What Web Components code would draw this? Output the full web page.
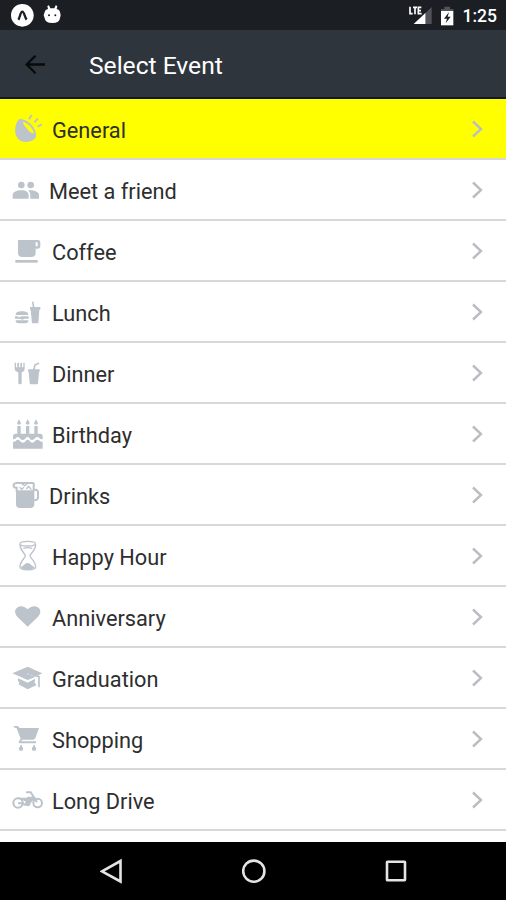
<!DOCTYPE html>
<html lang="en">
<head>
<meta charset="utf-8">
<title>Select Event</title>
<style>
html, body {
  margin: 0;
  height: 100%;
  overflow: hidden;
  background: #fff;
  font-family: Roboto, "Liberation Sans", sans-serif;
}
</style>
</head>
<body>
<event-screen></event-screen>

<script>
// Row icons share one grid: three units per pixel, the full height of a row
const icons = {
  general: `
    <path fill-rule="evenodd" d="M57 61C42 76 43 104 52 117C63 132 91 134 107 116C113 101 99 77 82 67C72 61 63 58 57 61ZM69 69C82 70 98 87 102 103C95 103 88 99 84 93C79 85 71 82 69 69Z"/>
    <path class="line" stroke-width="6" d="M87 61L95 48M103 70L114 58M113 83L126 76"/>`,
  friends: `
    <circle cx="64" cy="75" r="10"/><circle cx="92" cy="75" r="10"/>
    <path d="M38 116V107C38 95 50 91 64 91S86 96 86 107V116ZM91 116V106C91 100 88 95 84 91C102 90 117 95 117 106V116Z"/>`,
  coffee: `
    <path fill-rule="evenodd" d="M54 57H114Q121 57 121 65V75Q121 83 112 83H107V95Q107 108 94 108H67Q54 108 54 95ZM107 64V76H113V64Z"/>
    <path d="M46 117H113V125H46Z"/>`,
  lunch: `
    <path d="M47 99C47 91 54 88 66 88S85 91 85 99ZM45 103H53L58 106L64 103H86V110H73L67 113L60 110H45ZM47 115H85C85 122 82 124 77 124H56C50 124 47 122 47 115Z"/>
    <path d="M90 75H98L96 60L100 58L103 75H121V83H118L115 124H96L92 83H90Z"/>`,
  dinner: `
    <path d="M44 59H48V73H52V59H57V73H61V59H66V73H70V59H74V76Q74 86 65 88V121Q65 124 60 124T55 121V88Q44 86 44 76Z"/>
    <path d="M84 79H119V86H117L114 121Q114 124 110 124H94Q90 124 89 121L86 86H84Z"/>
    <path class="line" stroke-width="5" d="M101 82L105 66L117 60"/>`,
  birthday: `
    <path d="M52 66H62V89H78V66H88V89H103V66H113V89H121Q128 89 128 97V105C119 108 118 99 112 99C103 99 105 108 96 108S91 99 83 99S77 108 68 108S61 99 54 99S48 108 39 105V97Q39 89 47 89H52Z"/>
    <path d="M39 113C48 114 48 107 54 107S61 116 69 116S76 107 83 107S90 116 97 116S105 107 112 107S119 114 128 113V134H39Z"/>
    <path d="M57 46L63 57Q62 62 57 62T51 57ZM83 46L89 57Q88 62 83 62T77 57ZM108 46L114 57Q113 62 108 62T102 57Z"/>`,
  drinks: `
    <path d="M48 76H103V118Q103 129 91 129H60Q48 129 48 118Z"/>
    <path class="line" stroke-width="6" d="M50 80V68C38 69 38 55 47 55Q51 52 56 54H98Q103 54 101 63V78M102 74H108Q114 75 114 82V97Q114 106 102 106"/>
    <path class="line" stroke-width="4" d="M59 67L65 73L72 67M79 72L86 64L94 74M65 56L74 62L82 56"/>`,
  hourglass: `
    <ellipse class="line" stroke-width="4" cx="83" cy="53" rx="23" ry="7"/>
    <path class="line" stroke-width="4" d="M60 55C60 76 76 82 76 89S60 105 60 123C60 134 107 134 107 123C107 106 90 96 90 89S107 76 107 55M70 67Q83 63 97 67"/>
    <path d="M62 123Q68 122 74 115Q83 107 91 115Q98 122 104 123Q98 132 83 132T62 123Z"/>`,
  heart: `
    <path d="M83 119L52 89C32 67 61 45 83 67C105 45 135 67 114 89Z"/>`,
  graduation: `
    <path d="M37 76L83 56L127 76L112 83L84 75L81 79L107 86L83 96Z"/>
    <path d="M54 91L83 104L105 92V98Q101 103 110 111L83 124L55 109Q61 105 54 98Z"/>
    <path class="line" stroke-width="5" d="M84 77L117 86V118"/>`,
  cart: `
    <path d="M41 51H52Q57 52 59 57H117L106 88Q104 92 99 92H67L63 97H108V103H61Q54 102 57 97L62 89L50 58Q46 56 41 55Z"/>
    <circle cx="63" cy="119" r="6.5"/><circle cx="102" cy="119" r="6.5"/>
    <path d="M61 108H66V115H61ZM100 108H105V115H100Z"/>`,
  motorcycle: `
    <circle class="line" stroke-width="6" cx="54" cy="99" r="14"/>
    <circle class="line" stroke-width="6" cx="113" cy="99" r="13"/>
    <path d="M45 85C60 78 74 88 85 80H104L110 88C96 90 94 97 88 109L68 106L78 95Q68 91 61 88Z"/>
    <path class="line" stroke-width="6" d="M78 67H92L111 97M54 100H72"/>`
}

const events = [
  ['general', 'General'],
  ['friends', 'Meet a friend'],
  ['coffee', 'Coffee'],
  ['lunch', 'Lunch'],
  ['dinner', 'Dinner'],
  ['birthday', 'Birthday'],
  ['drinks', 'Drinks'],
  ['hourglass', 'Happy Hour'],
  ['heart', 'Anniversary'],
  ['graduation', 'Graduation'],
  ['cart', 'Shopping'],
  ['motorcycle', 'Long Drive']
]

customElements.define('status-bar',
  /**
   * System bar with notifications on the left, signal, battery and clock on the right.
   */
  class extends HTMLElement {
    constructor () {
      super()
      this.attachShadow({ mode: 'open' }).innerHTML = `
<style>
:host {
  display: flex;
  justify-content: space-between;
  height: 30px;
  background: #1b1f24;
  color: #fff;
}
svg {
  display: block;
}
.right {
  display: flex;
  padding-right: 9px;
}
.time {
  font-size: 17.5px;
  font-weight: 500;
  line-height: 33px;
}
</style>
<svg width="70" height="30" viewBox="0 0 210 90">
  <circle cx="67" cy="46" r="34" fill="#fff"/>
  <path d="M55 59C60 53 61 35 67 35S74 53 80 59" fill="none" stroke="#1b1f24" stroke-width="7"/>
  <path d="M134 36Q135 29 144 27L142 18L147 16L151 25H163L167 16L172 18L170 27Q179 29 180 36L182 46L180 54Q179 69 157 69T134 54L131 46Z" fill="#fff"/>
  <circle cx="147" cy="46" r="3" fill="#1b1f24"/><circle cx="166" cy="46" r="3" fill="#1b1f24"/>
</svg>
<div class="right">
  <svg width="54" height="30" viewBox="0 0 162 90">
    <path d="M14 72L50 38V72Z" fill="#fff"/>
    <path d="M50 38L68 21V72H50Z" fill="#50545a"/>
    <path d="M0 18H38V44H0Z" fill="#1b1f24"/>
    <path d="M3 20V41H11M12 22H24M18 22V43M37 22H28V41H38M28 32H36" fill="none" stroke="#fff" stroke-width="5"/>
    <path d="M106 20H123V27H133V34H96V27H106Z" fill="#50545a"/>
    <path d="M96 33H133V76H96Z" fill="#fff"/>
    <path d="M120 36L105 56H114L110 70L125 50H116Z" fill="#1b1f24"/>
  </svg>
  <span class="time">1:25</span>
</div>
`
    }
  })

customElements.define('app-bar',
  /**
   * Title bar, the title is slotted.
   */
  class extends HTMLElement {
    constructor () {
      super()
      this.attachShadow({ mode: 'open' }).innerHTML = `
<style>
:host {
  display: flex;
  align-items: center;
  box-sizing: border-box;
  height: 69px;
  padding: 3px 0 0 25px;
  border-bottom: 2px solid #141622;
  background: #2f353c;
  color: #fff;
  font-size: 24.6px;
}
svg {
  margin-right: 43px;
}
</style>
<svg width="21" height="20" viewBox="0 0 21 20" fill="none" stroke="#08090b" stroke-width="2.3"><path d="M20 9.5H2M10.5 0.8L1.7 9.5L10.5 18.2"/></svg>
<slot></slot>
`
    }
  })

customElements.define('event-row',
  /**
   * One line of the list. Takes an icon name and an optional selected attribute.
   */
  class extends HTMLElement {
    constructor () {
      super()
      this.attachShadow({ mode: 'open' })
    }

    connectedCallback () {
      this.shadowRoot.innerHTML = `
<style>
:host {
  display: flex;
  flex-shrink: 0;
  align-items: center;
  box-sizing: border-box;
  height: 61px;
  padding-right: 22px;
  background: linear-gradient(#d8d8d8, #d8d8d8) bottom / 100% 2px no-repeat #fff;
  color: #2e2e2e;
  font-size: 21.75px;
}
:host([selected]) {
  background-color: #ff0;
}
.icon {
  width: 52px;
  height: 61px;
  fill: #bcc3cb;
}
:host([icon="friends"]) .icon,
:host([icon="drinks"]) .icon {
  width: 49px;
}
.line {
  fill: none;
  stroke: #bcc3cb;
}
.label {
  flex: 1;
  padding-top: 2px;
}
.chevron {
  margin-bottom: 2px;
}
</style>
<svg class="icon" viewBox="0 0 156 183" preserveAspectRatio="xMinYMin slice">${icons[this.getAttribute('icon')]}</svg>
<span class="label"><slot></slot></span>
<svg class="chevron" width="13" height="18" viewBox="0 0 13 18" fill="none" stroke="#babdc1" stroke-width="2.4"><path d="M2 1.5L10 9L2 16.5"/></svg>
`
    }
  })

customElements.define('nav-bar',
  /**
   * Back, home and recents buttons.
   */
  class extends HTMLElement {
    constructor () {
      super()
      this.attachShadow({ mode: 'open' }).innerHTML = `
<style>
:host {
  display: flex;
  justify-content: center;
  align-items: center;
  gap: 118px;
  box-sizing: border-box;
  height: 58px;
  padding-left: 2px;
  background: #000;
}
svg {
  fill: none;
  stroke: #e4e4e4;
  stroke-width: 2.6;
}
</style>
<svg width="24" height="26" viewBox="0 0 24 26"><path d="M20.5 3L2 13.3L20.5 23.5Z"/></svg>
<svg width="24" height="26" viewBox="0 0 24 26"><circle cx="11.8" cy="13.2" r="10.6"/></svg>
<svg width="24" height="26" viewBox="0 0 24 26"><rect x="3" y="3.7" width="18" height="18.5" rx="0.5"/></svg>
`
    }
  })

customElements.define('event-screen',
  /**
   * The whole phone screen.
   */
  class extends HTMLElement {
    constructor () {
      super()
      this.attachShadow({ mode: 'open' }).innerHTML = `
<style>
:host {
  display: flex;
  flex-direction: column;
  height: 900px;
}
.list {
  display: flex;
  flex: 1;
  flex-direction: column;
  min-height: 0;
  overflow: hidden;
}
</style>
<status-bar></status-bar>
<app-bar>Select Event</app-bar>
<div class="list">
  ${events.map(([icon, name], i) => `<event-row icon="${icon}"${i === 0 ? ' selected' : ''}>${name}</event-row>`).join('')}
</div>
<nav-bar></nav-bar>
`
    }
  })
</script>
</body>
</html>
